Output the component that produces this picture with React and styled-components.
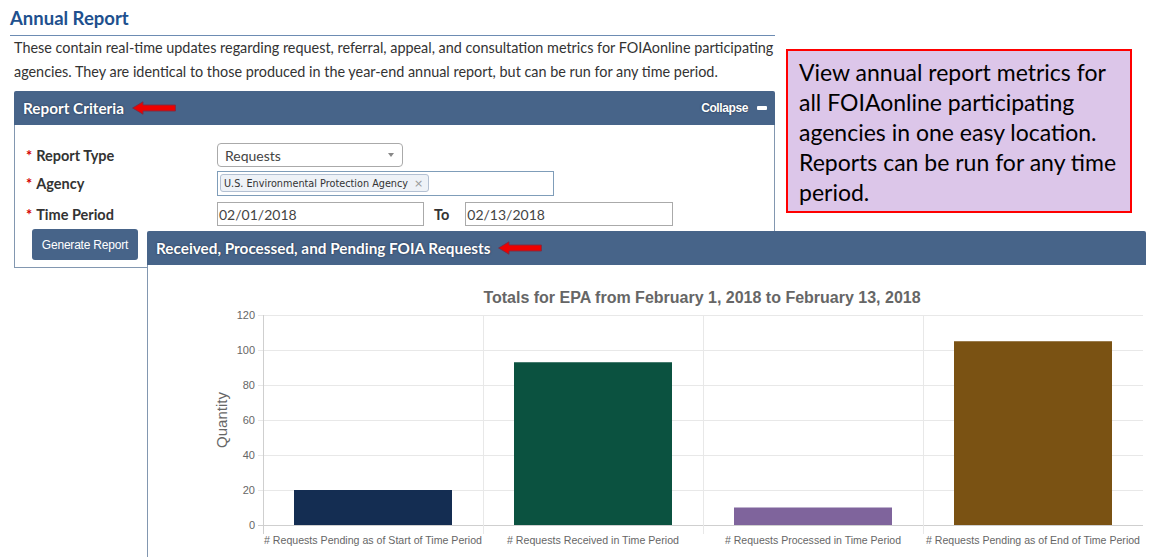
import React from "react";
import styled, { createGlobalStyle } from "styled-components";

const GlobalStyle = createGlobalStyle`
	body {
		margin: 0;
		background: #fff;
		font-family: Lato, "Open Sans", sans-serif;
		color: #333;
	}
`;

const Page = styled.div`
	position: relative;
	width: 1158px;
	height: 557px;
	overflow: hidden;
	padding-left: 10px;
	box-sizing: border-box;
`;

const TitleBar = styled.h1`
	margin: 0;
	width: 765px;
	height: 36px;
	box-sizing: border-box;
	padding-top: 7px;
	border-bottom: 1px solid #6d8cb3;
	font-size: 18.5px;
	line-height: 22px;
	font-weight: 700;
	color: #20508e;
`;

const Intro = styled.p`
	margin: 0 0 0 4px;
	font-size: 14.4px;
	line-height: 24px;
	color: #333;
`;

const Line = styled.span`
	display: block;
	white-space: nowrap;
`;

const Panel = styled.section`
	width: ${(p) => p.$width}px;
	margin: ${(p) => p.$margin};
	position: relative;
	z-index: ${(p) => p.$layer || 0};
	background: #fff;
`;

const PanelHeader = styled.header`
	height: 34px;
	display: flex;
	align-items: center;
	justify-content: space-between;
	padding: 0 8px 0 9px;
	background: #476489;
	border-radius: 2px 2px 0 0;
	color: #fff;
`;

const PanelTitle = styled.h2`
	margin: 0;
	display: flex;
	align-items: center;
	gap: 8px;
	font-size: 15.3px;
	font-weight: 700;
	text-shadow: 0 0 2px rgba(20, 30, 50, 0.8);
`;

const Collapse = styled.span`
	display: flex;
	align-items: center;
	gap: 9px;
	font-family: "Liberation Sans", Arial, sans-serif;
	font-size: 12px;
	font-weight: 700;
	letter-spacing: -0.4px;
	text-shadow: 0 0 2px rgba(20, 30, 50, 0.8);
`;

const Minus = styled.i`
	display: block;
	width: 10px;
	height: 4px;
	border-radius: 1px;
	background: #fff;
`;

const CriteriaBody = styled.div`
	border: 1px solid #8297b0;
	border-top: none;
	padding: 18px 0 7px 11px;
`;

const FieldRow = styled.div`
	display: flex;
	align-items: center;
	height: 24px;
	margin-bottom: ${(p) => p.$gap}px;
`;

const Label = styled.label`
	width: 191px;
	flex: none;
	font-size: 14.5px;
	font-weight: 700;
	color: #333;
`;

const Star = styled.span`
	color: #d40000;
	margin-right: 4px;
`;

const Select = styled.div`
	width: 186px;
	height: 24px;
	box-sizing: border-box;
	display: flex;
	align-items: center;
	justify-content: space-between;
	padding: 0 8px 0 7px;
	border: 1px solid #aaa;
	border-radius: 4px;
	font-size: 14px;
	color: #444;
`;

const Caret = styled.i`
	width: 0;
	height: 0;
	border-left: 3.5px solid transparent;
	border-right: 3.5px solid transparent;
	border-top: 4px solid #888;
`;

const TagInput = styled.div`
	width: 337px;
	height: 25px;
	box-sizing: border-box;
	display: flex;
	align-items: center;
	padding: 0 2px;
	border: 1px solid #7f9db9;
`;

const Tag = styled.span`
	display: flex;
	align-items: center;
	gap: 6px;
	height: 18px;
	box-sizing: border-box;
	padding: 0 5px 0 3px;
	border: 1px solid #b3c0d2;
	border-radius: 3px;
	background: #eef2f7;
	font-family: "DejaVu Sans", Verdana, sans-serif;
	font-size: 9.7px;
	color: #333;
`;

const TagClose = styled.span`
	color: #999;
	font-size: 11px;
`;

const DateInput = styled.div`
	width: ${(p) => p.$width}px;
	height: 24px;
	box-sizing: border-box;
	display: flex;
	align-items: center;
	padding-left: 1px;
	border: 1px solid #aaa;
	font-size: 14px;
	color: #444;
`;

const ToLabel = styled.span`
	font-size: 14.5px;
	font-weight: 700;
	margin: 0 16px 0 10px;
`;

const GenerateButton = styled.button`
	display: block;
	margin-left: 6px;
	width: 106px;
	height: 31px;
	border: none;
	border-radius: 3px;
	background: #476489;
	color: #fff;
	font-family: "Liberation Sans", Arial, sans-serif;
	font-size: 12px;
	letter-spacing: -0.2px;
	cursor: pointer;
`;

const ChartBody = styled.div`
	height: 292px;
	border-left: 1px solid #8297b0;
`;

const Callout = styled.aside`
	position: absolute;
	left: 786px;
	top: 49px;
	width: 346px;
	height: 164px;
	box-sizing: border-box;
	padding: 6px 0 0 11px;
	border: 2px solid #f00;
	background: #dcc6e9;
	font-family: Lato, "Open Sans", sans-serif;
	font-size: 23px;
	line-height: 30px;
	color: #000;
	white-space: nowrap;
`;

const Arrow = () => (
	<svg width="44" height="14" viewBox="0 0 44 14">
		<path
			d="M0.6 7 L11 0.8 L11 4 L43.4 4 L43.4 10 L11 10 L11 13.2 Z"
			fill="#ee0000"
			stroke="#7b2c44"
			strokeWidth="0.9"
		/>
	</svg>
);

const ticks = [0, 20, 40, 60, 80, 100, 120];
const bars = [
	{ label: "# Requests Pending as of Start of Time Period", value: 20, color: "#142d52" },
	{ label: "# Requests Received in Time Period", value: 93, color: "#0b5240" },
	{ label: "# Requests Processed in Time Period", value: 10, color: "#7f649c" },
	{ label: "# Requests Pending as of End of Time Period", value: 105, color: "#7a5213" },
];
const labelWidths = [218, 172, 176, 214];

const yOf = (v) => 525 - v * 1.75;

const Chart = () => (
	<svg width="998" height="292" viewBox="148 265 998 292" style={{ display: "block" }}>
		<g fontFamily="'Liberation Sans', Arial, sans-serif" fill="#666">
			<text x="702" y="303" textAnchor="middle" fontSize="16" fontWeight="700">
				Totals for EPA from February 1, 2018 to February 13, 2018
			</text>
			{ticks.map((t) => (
				<g key={t}>
					<line x1="258" x2="1143" y1={yOf(t) + 0.5} y2={yOf(t) + 0.5} stroke={t === 0 ? "#cfcfcf" : "#e8e8e8"} />
					<text x="255" y={yOf(t) + 4} textAnchor="end" fontSize="11">
						{t}
					</text>
				</g>
			))}
			{[1, 2, 3].map((i) => (
				<line key={i} x1={263 + i * 220 + 0.5} x2={263 + i * 220 + 0.5} y1="315" y2="534" stroke="#e8e8e8" />
			))}
			<line x1="263.5" x2="263.5" y1="315" y2="534" stroke="#cfcfcf" />
			{bars.map((b, i) => (
				<g key={b.label}>
					<rect
						x={263 + i * 220 + 31}
						y={yOf(b.value)}
						width="158"
						height={b.value * 1.75}
						fill={b.color}
					/>
					<text
						x={263 + i * 220 + 110}
						y="544"
						textAnchor="middle"
						fontSize="10.5"
						textLength={labelWidths[i]}
						lengthAdjust="spacingAndGlyphs"
					>
						{b.label}
					</text>
				</g>
			))}
			<text x="222" y="425" textAnchor="middle" fontSize="15" transform="rotate(-90 222 420)">
				Quantity
			</text>
		</g>
	</svg>
);

export default function App() {
	return (
		<>
			<GlobalStyle />
			<Page>
				<TitleBar>Annual Report</TitleBar>
				<Intro>
					<Line>
						These contain real-time updates regarding request, referral, appeal, and consultation metrics for FOIAonline participating
					</Line>
					<Line>agencies. They are identical to those produced in the year-end annual report, but can be run for any time period.</Line>
				</Intro>

				<Panel $width={761} $margin="7px 0 0 4px">
					<PanelHeader>
						<PanelTitle>
							Report Criteria <Arrow />
						</PanelTitle>
						<Collapse>
							Collapse <Minus />
						</Collapse>
					</PanelHeader>
					<CriteriaBody>
						<FieldRow $gap={4}>
							<Label>
								<Star>*</Star>Report Type
							</Label>
							<Select>
								Requests <Caret />
							</Select>
						</FieldRow>
						<FieldRow $gap={7}>
							<Label>
								<Star>*</Star>Agency
							</Label>
							<TagInput>
								<Tag>
									U.S. Environmental Protection Agency <TagClose>×</TagClose>
								</Tag>
							</TagInput>
						</FieldRow>
						<FieldRow $gap={3}>
							<Label>
								<Star>*</Star>Time Period
							</Label>
							<DateInput $width={207}>02/01/2018</DateInput>
							<ToLabel>To</ToLabel>
							<DateInput $width={208}>02/13/2018</DateInput>
						</FieldRow>
						<GenerateButton>Generate Report</GenerateButton>
					</CriteriaBody>
				</Panel>

				<Panel $width={999} $margin="-37px 0 0 137px" $layer={1}>
					<PanelHeader>
						<PanelTitle>
							Received, Processed, and Pending FOIA Requests <Arrow />
						</PanelTitle>
					</PanelHeader>
					<ChartBody>
						<Chart />
					</ChartBody>
				</Panel>

				<Callout>
					View annual report metrics for
					<br />
					all FOIAonline participating
					<br />
					agencies in one easy location.
					<br />
					Reports can be run for any time
					<br />
					period.
				</Callout>
			</Page>
		</>
	);
}
